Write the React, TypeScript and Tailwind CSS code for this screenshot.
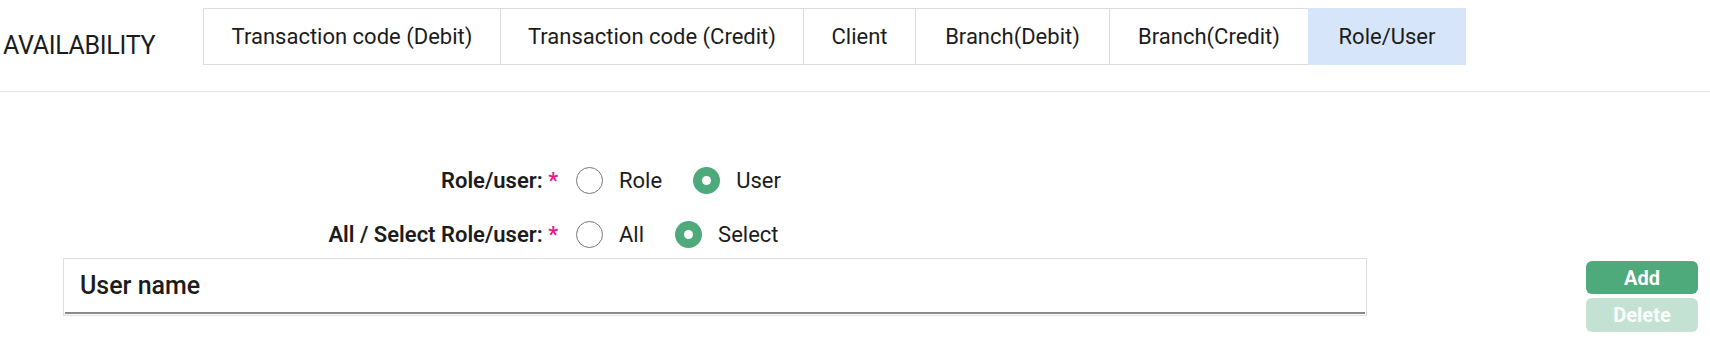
import React, { useState } from "react";

const tabs = [
  { label: "Transaction code (Debit)", width: "w-[297px]" },
  { label: "Transaction code (Credit)", width: "w-[303px]" },
  { label: "Client", width: "w-[112px]" },
  { label: "Branch(Debit)", width: "w-[194px]" },
  { label: "Branch(Credit)", width: "w-[199px]" },
  { label: "Role/User", width: "w-[158px]" },
];

const Radio = ({ checked }: { checked: boolean }) => {
  return checked ? (
    <span className="w-[27px] h-[27px] rounded-full bg-[#4ea97b] flex items-center justify-center shrink-0">
      <span className="w-[9px] h-[9px] rounded-full bg-white"></span>
    </span>
  ) : (
    <span className="w-[27px] h-[27px] rounded-full border-[1.5px] border-[#767676] bg-white shrink-0"></span>
  );
};

const App: React.FC = () => {
  const [tab, setTab] = useState<string>("Role/User");
  const [roleUser, setRoleUser] = useState<string>("user");
  const [scope, setScope] = useState<string>("select");

  return (
    <div className="w-[1710px] h-[346px] bg-white text-[#1c1c1c] font-['Roboto',sans-serif] overflow-hidden">
      <div className="flex flex-row items-start h-[92px] border-b border-[#e2e2e2]">
        <div className="w-[203px] pl-[3px] pt-[31px] text-[25px] leading-[30px] font-normal tracking-[-0.3px]">AVAILABILITY</div>
        <div className="flex flex-row mt-[8px] h-[57px]">
          {tabs.map((t, i) => (
            <div
              key={t.label}
              onClick={() => setTab(t.label)}
              className={`${t.width} flex items-center justify-center text-[22px] cursor-pointer border-y ${i === 0 ? "border-l" : ""} ${
                tab === t.label ? "bg-[#d7e5fb] border-[#d7e5fb] border-l-[#dcdcdc]" : "border-l border-[#dcdcdc]"
              }`}
            >
              {t.label}
            </div>
          ))}
        </div>
      </div>

      <div className="grid grid-cols-[558px_auto] gap-x-[18px] gap-y-[27px] items-center mt-[75px]">
        <div className="text-right text-[22px] font-semibold leading-[27px]">
          Role/user: <span className="text-[#e8168a]">*</span>
        </div>
        <div className="flex flex-row items-center text-[22px] leading-[27px]">
          <label className="flex items-center cursor-pointer" onClick={() => setRoleUser("role")}>
            <Radio checked={roleUser === "role"} />
            <span className="ml-[16px]">Role</span>
          </label>
          <label className="flex items-center cursor-pointer ml-[31px]" onClick={() => setRoleUser("user")}>
            <Radio checked={roleUser === "user"} />
            <span className="ml-[16px]">User</span>
          </label>
        </div>

        <div className="text-right text-[22px] font-semibold leading-[27px]">
          All / Select Role/user: <span className="text-[#e8168a]">*</span>
        </div>
        <div className="flex flex-row items-center text-[22px] leading-[27px]">
          <label className="flex items-center cursor-pointer" onClick={() => setScope("all")}>
            <Radio checked={scope === "all"} />
            <span className="ml-[16px]">All</span>
          </label>
          <label className="flex items-center cursor-pointer ml-[31px]" onClick={() => setScope("select")}>
            <Radio checked={scope === "select"} />
            <span className="ml-[16px]">Select</span>
          </label>
        </div>
      </div>

      <div className="flex flex-row items-start pl-[63px] pr-[12px] mt-[10px]">
        <div className="w-[1304px] border border-[#dedede] p-px">
          <div className="h-[54px] border-b-2 border-[#8a8a8a] flex items-center pl-[15px] text-[25px] font-medium">User name</div>
        </div>
        <div className="ml-auto w-[112px] flex flex-col gap-[4px] mt-[3px]">
          <button className="h-[33px] rounded-[6px] bg-[#4ea97b] text-white text-[20px] font-bold leading-none">Add</button>
          <button className="h-[34px] rounded-[6px] bg-[#c4e2d3] text-[#fbfefc] text-[20px] font-bold leading-none cursor-default">Delete</button>
        </div>
      </div>
    </div>
  );
};

export default App;
